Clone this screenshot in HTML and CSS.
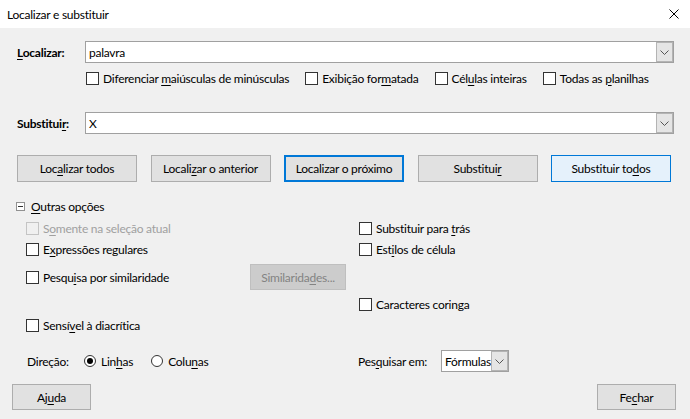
FILE: index.html
```html
<!DOCTYPE html>
<html lang="pt">
<head>
<meta charset="utf-8">
<title>Localizar e substituir</title>
<link rel="stylesheet" href="styles.css">
</head>
<body>
<div class="dialog">
  <header class="titlebar">
    <span class="title">Localizar e substituir</span>
    <svg class="close" width="10" height="10" viewBox="0 0 10 10"><path d="M0.5 0.5L9.5 9.5M9.5 0.5L0.5 9.5" stroke="#000" stroke-width="1" fill="none"/></svg>
  </header>

  <main class="content">
    <div class="field-row">
      <span class="field-label"><u>L</u>ocalizar:</span>
      <div class="combo wide">
        <span class="combo-text">palavra</span>
        <span class="combo-btn"><svg width="9" height="5" viewBox="0 0 9 5"><path d="M0.5 0.5L4.5 4.5L8.5 0.5" stroke="#555" fill="none"/></svg></span>
      </div>
    </div>

    <div class="check-row">
      <label class="check"><span class="box"></span><span class="lbl">Diferenciar <u>m</u>aiúsculas de minúsculas</span></label>
      <label class="check"><span class="box"></span><span class="lbl">Exibição for<u>m</u>atada</span></label>
      <label class="check"><span class="box"></span><span class="lbl">Cél<u>u</u>las inteiras</span></label>
      <label class="check"><span class="box"></span><span class="lbl">Todas as <u>p</u>lanilhas</span></label>
    </div>

    <div class="field-row replace">
      <span class="field-label">Substitui<u>r</u>:</span>
      <div class="combo wide">
        <span class="combo-text">X</span>
        <span class="combo-btn"><svg width="9" height="5" viewBox="0 0 9 5"><path d="M0.5 0.5L4.5 4.5L8.5 0.5" stroke="#555" fill="none"/></svg></span>
      </div>
    </div>

    <div class="buttons">
      <button class="btn">Loc<u>a</u>lizar todos</button>
      <button class="btn">Locali<u>z</u>ar o anterior</button>
      <button class="btn focused">Localizar o próximo</button>
      <button class="btn">Substitui<u>r</u></button>
      <button class="btn default">Substituir to<u>d</u>os</button>
    </div>

    <section class="options">
      <div class="opt-header">
        <span class="expander"><span class="minus"></span></span>
        <span class="lbl"><u>O</u>utras opções</span>
      </div>

      <div class="opt-grid">
        <label class="check disabled span2"><span class="box"></span><span class="lbl">S<u>o</u>mente na seleção atual</span></label>
        <label class="check"><span class="box"></span><span class="lbl">Substituir para <u>t</u>rás</span></label>

        <label class="check span2"><span class="box"></span><span class="lbl">E<u>x</u>pressões regulares</span></label>
        <label class="check"><span class="box"></span><span class="lbl">Est<u>i</u>los de célula</span></label>

        <label class="check"><span class="box"></span><span class="lbl">Pesqu<u>i</u>sa por similaridade</span></label>
        <div class="cell-btn"><button class="btn small disabled-btn">Similarida<u>d</u>es...</button></div>
        <div></div>

        <div class="span2"></div>
        <label class="check"><span class="box"></span><span class="lbl">Caracteres coringa</span></label>

        <label class="check span2"><span class="box"></span><span class="lbl">Sensí<u>v</u>el à diacrítica</span></label>
        <div></div>

        <div class="direction span2">
          <span class="dir-label">Direção:</span>
          <label class="radio"><span class="circle checked"></span><span class="lbl">Lin<u>h</u>as</span></label>
          <label class="radio"><span class="circle"></span><span class="lbl">Colu<u>n</u>as</span></label>
        </div>
        <div class="search-in">
          <span class="search-label">Pes<u>q</u>uisar em:</span>
          <div class="combo small-combo">
            <span class="combo-text">Fórmulas</span>
            <span class="combo-btn"><svg width="9" height="5" viewBox="0 0 9 5"><path d="M0.5 0.5L4.5 4.5L8.5 0.5" stroke="#555" fill="none"/></svg></span>
          </div>
        </div>
      </div>
    </section>
  </main>

  <footer class="footer">
    <button class="btn foot">Aj<u>u</u>da</button>
    <button class="btn foot">Fe<u>c</u>har</button>
  </footer>
</div>
</body>
</html>
```

FILE: styles.css
```css
* { box-sizing: border-box; }
html, body { margin: 0; padding: 0; }
body {
  width: 690px;
  height: 419px;
  overflow: hidden;
  background: #f0f0f0;
  font-family: Lato, "Liberation Sans", sans-serif;
  font-size: 12px;
  letter-spacing: -0.25px;
  color: #000;
}
u { text-decoration: underline; text-underline-offset: 2px; }

.titlebar {
  height: 28px;
  background: #fff;
  display: flex;
  align-items: center;
  justify-content: space-between;
  padding: 0 11px 0 7px;
}
.title { font-size: 12px; }

.content { padding: 13px 16px 0 17px; }

.field-row { display: flex; align-items: center; height: 22px; }
.field-row.replace { margin-top: 24px; }
.field-label { width: 68px; font-weight: bold; }

.combo {
  height: 22px;
  border: 1px solid #a0a0a0;
  background: #fff;
  display: flex;
  align-items: stretch;
}
.combo.wide { flex: 1; }
.combo-text { flex: 1; padding-left: 3px; display: flex; align-items: center; }
.combo-btn {
  width: 17px;
  background: #e5e5e5;
  border: 1px solid #b4b4b4;
  display: flex;
  align-items: center;
  justify-content: center;
}

.check-row {
  display: flex;
  gap: 16px;
  height: 20px;
  margin: 5px 0 0 69px;
  align-items: center;
}
.check { display: flex; align-items: center; white-space: nowrap; }
.lbl { white-space: nowrap; }
.box {
  width: 13px;
  height: 13px;
  border: 1px solid #333;
  background: #fff;
  margin-right: 4px;
  flex: none;
}
.check.disabled { color: #a0a0a0; }
.check.disabled .box { border-color: #c4c4c4; background: #f0f0f0; }

.buttons {
  display: flex;
  gap: 13.5px;
  margin-top: 21px;
}
.btn {
  font-family: inherit;
  font-size: 12px;
  letter-spacing: -0.25px;
  color: #000;
  background: #e1e1e1;
  border: 1px solid #adadad;
  height: 27px;
  width: 120px;
  padding: 0;
  margin: 0;
}
.btn.focused { border: 2px solid #0078d7; }
.btn.default { background: #e5f1fb; border-color: #0078d7; }

.opt-header {
  display: flex;
  align-items: center;
  height: 16px;
  margin: 16px 0 0 -1px;
}
.expander {
  width: 9px;
  height: 9px;
  border: 1px solid #919191;
  background: #fff;
  display: flex;
  align-items: center;
  justify-content: center;
  margin-right: 6px;
}
.minus { width: 5px; height: 1px; background: #333; }

.opt-grid {
  display: grid;
  grid-template-columns: 224px 109px 1fr;
  grid-template-rows: 21px 21px 34px 20px 22px 38px;
  margin: 4px 0 0 9px;
  align-items: center;
}
.span2 { grid-column: span 2; }
.cell-btn { display: flex; }
.btn.small { width: 96px; height: 26px; }
.btn.disabled-btn { background: #cccccc; border-color: #bfbfbf; color: #838383; }

.direction { display: flex; align-items: center; height: 26px; margin-top: 12px; }
.dir-label { width: 58px; padding-left: 1px; }
.radio { display: flex; align-items: center; margin-right: 18px; }
.circle {
  width: 12px;
  height: 12px;
  border: 1px solid #333;
  border-radius: 50%;
  background: #fff;
  margin-right: 5px;
  display: flex;
  align-items: center;
  justify-content: center;
}
.circle.checked::after {
  content: "";
  width: 6px;
  height: 6px;
  border-radius: 50%;
  background: #000;
}
.search-in { display: flex; align-items: center; height: 26px; margin-top: 12px; margin-left: -1px; }
.search-label { width: 83px; }
.small-combo { width: 68px; }

.footer {
  display: flex;
  justify-content: space-between;
  padding: 0 14px 0 12px;
  margin-top: 10px;
}
.btn.foot { width: 79px; height: 26px; }
```
